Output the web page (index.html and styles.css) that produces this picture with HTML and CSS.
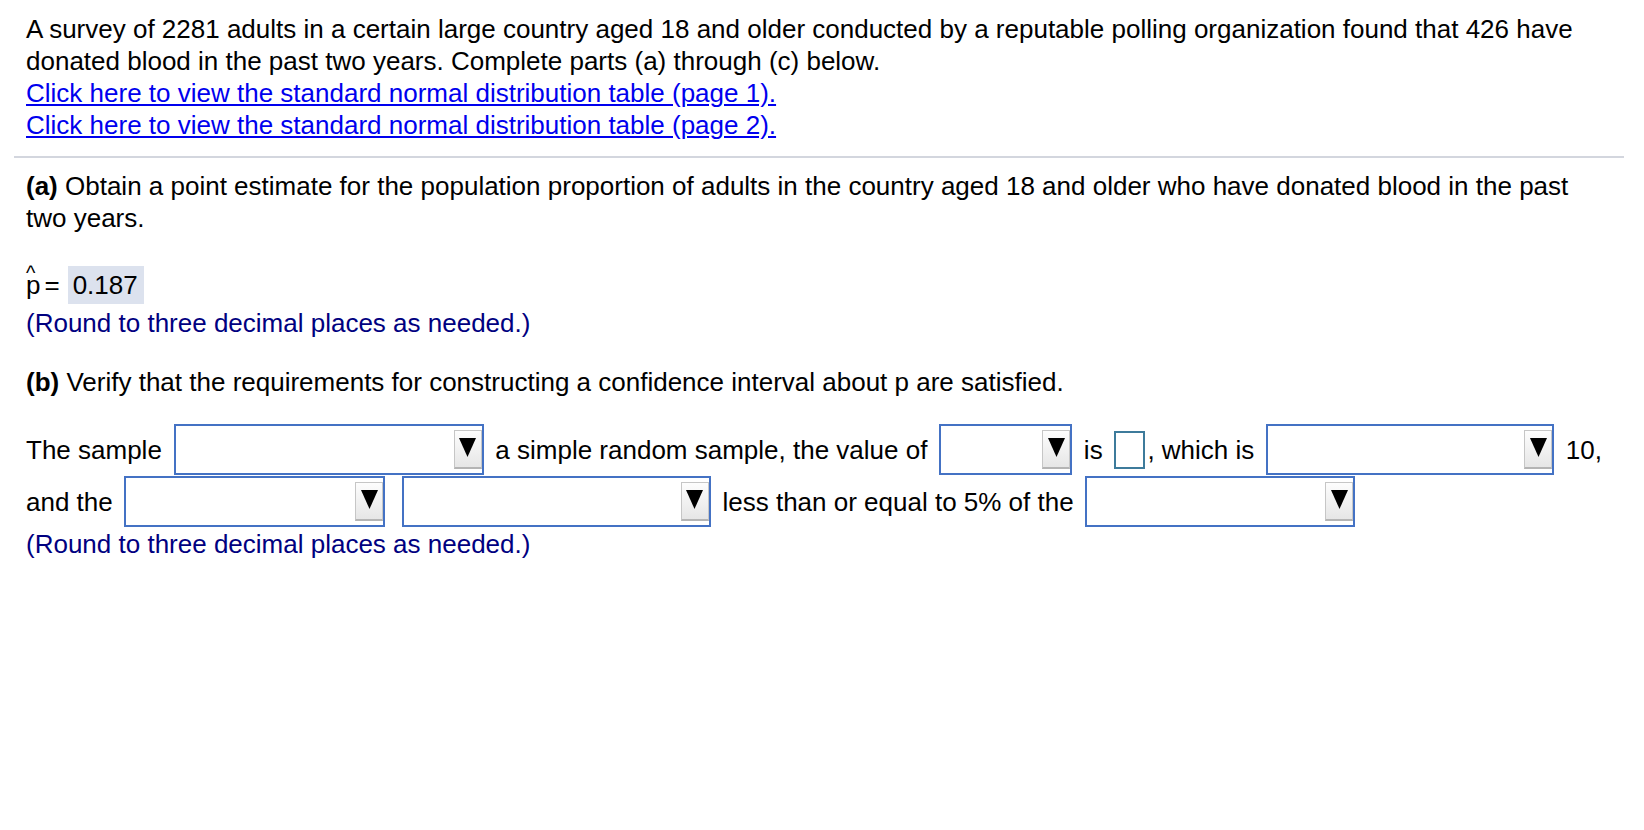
FILE: index.html
```html
<!DOCTYPE html>
<html>
<head>
<meta charset="utf-8">
<link rel="stylesheet" href="styles.css">
</head>
<body>
<div class="page">
  <div class="intro">
    <p class="stem">A survey of 2281 adults in a certain large country aged 18 and older conducted by a reputable polling organization found that 426 have donated blood in the past two years. Complete parts (a) through (c) below.</p>
    <a class="link" href="#">Click here to view the standard normal distribution table (page 1).</a>
    <a class="link" href="#">Click here to view the standard normal distribution table (page 2).</a>
  </div>
  <div class="rule"></div>
  <div class="part">
    <p class="q"><b>(a)</b> Obtain a point estimate for the population proportion of adults in the country aged 18 and older who have donated blood in the past two years.</p>
    <div class="answer"><span class="phat"><span class="hat">^</span>p</span><span class="eq">=</span><span class="val">0.187</span></div>
    <p class="note">(Round to three decimal places as needed.)</p>
    <p class="q qb"><b>(b)</b> Verify that the requirements for constructing a confidence interval about p are satisfied.</p>
    <div class="fill">The sample <span class="sel w310"><span class="btn"><svg width="17" height="19" viewBox="0 0 17 19"><polygon points="0,0 17,0 8.5,19" fill="#000"/></svg></span></span> a simple random sample, the value of <span class="sel w133"><span class="btn"><svg width="17" height="19" viewBox="0 0 17 19"><polygon points="0,0 17,0 8.5,19" fill="#000"/></svg></span></span> is <span class="box"></span>, which is <span class="sel w288"><span class="btn"><svg width="17" height="19" viewBox="0 0 17 19"><polygon points="0,0 17,0 8.5,19" fill="#000"/></svg></span></span> 10, and the <span class="sel w261"><span class="btn"><svg width="17" height="19" viewBox="0 0 17 19"><polygon points="0,0 17,0 8.5,19" fill="#000"/></svg></span></span> <span class="sel w309"><span class="btn"><svg width="17" height="19" viewBox="0 0 17 19"><polygon points="0,0 17,0 8.5,19" fill="#000"/></svg></span></span> less than or equal to 5% of the <span class="sel w270"><span class="btn"><svg width="17" height="19" viewBox="0 0 17 19"><polygon points="0,0 17,0 8.5,19" fill="#000"/></svg></span></span></div>
    <p class="note">(Round to three decimal places as needed.)</p>
  </div>
</div>
</body>
</html>
```

FILE: styles.css
```css
html, body {
  margin: 0;
  padding: 0;
  background: #fff;
}
body {
  font-family: "Liberation Sans", Arial, sans-serif;
  font-size: 26px;
  color: #000;
}
p {
  margin: 0;
}
.intro {
  padding: 13px 32px 0 26px;
  line-height: 32px;
}
.link {
  display: block;
  color: #0000ee;
  text-decoration: underline;
  width: max-content;
}
.rule {
  margin: 15px 20px 0 14px;
  border-top: 2px solid #d3d6de;
}
.part {
  padding: 12px 32px 0 26px;
  line-height: 32px;
}
.answer {
  margin-top: 32px;
  height: 38px;
  display: flex;
  align-items: center;
}
.phat {
  position: relative;
  display: inline-block;
}
.hat {
  position: absolute;
  left: 0;
  top: -6px;
  font-size: 20px;
  line-height: 20px;
}
.eq {
  margin-left: 4px;
}
.val {
  margin-left: 8px;
  height: 38px;
  line-height: 38px;
  padding: 0 6px 0 5px;
  background: #dce2ee;
}
.note {
  margin-top: 3px;
  color: #000080;
}
.qb {
  margin-top: 27px;
}
.fill {
  margin-top: 26px;
  line-height: 52px;
}
.fill + .note {
  margin-top: 0;
}
.sel {
  display: inline-flex;
  justify-content: flex-end;
  align-items: center;
  box-sizing: border-box;
  height: 51px;
  vertical-align: top;
  margin: 0 4.5px;
  border: 2px solid #4472c4;
  background: #fff;
}
.w310 { width: 310px; }
.w309 { width: 309px; }
.w133 { width: 133px; }
.w288 { width: 288px; }
.w261 { width: 261px; }
.w270 { width: 270px; }
.btn {
  box-sizing: border-box;
  width: 28px;
  height: 39px;
  border: 1px solid #c6c6c6;
  border-bottom: 2px solid #b4b4b4;
  background: linear-gradient(#fdfdfd, #e6e6e6);
  display: flex;
  justify-content: center;
  align-items: flex-start;
  padding-top: 7px;
}
.btn svg {
  display: block;
}
.box {
  display: inline-block;
  box-sizing: border-box;
  width: 31px;
  height: 38px;
  vertical-align: top;
  margin: 7px 2px 0 4.5px;
  border: 2px solid #3d7b9b;
  background: #fff;
}
```
